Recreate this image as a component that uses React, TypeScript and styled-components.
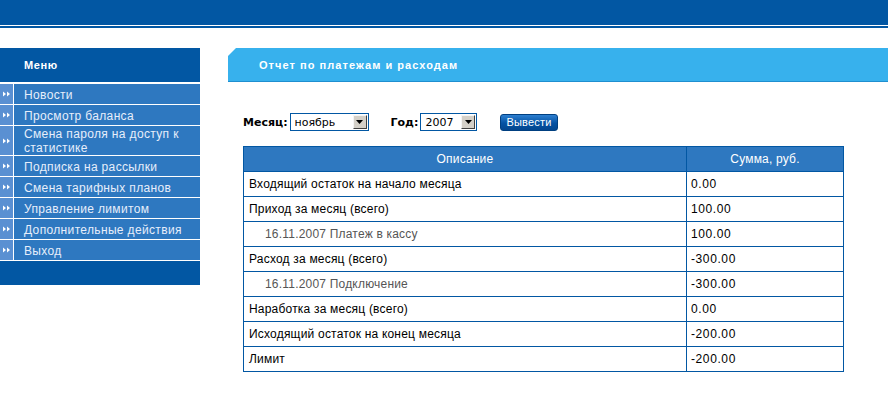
import React from 'react';
import styled, { createGlobalStyle } from 'styled-components';

const DarkBlue = '#0257a3';
const MidBlue = '#2e78c0';
const SkyBlue = '#37b1ed';

const GlobalStyle = createGlobalStyle`
  html, body {
    margin: 0;
    padding: 0;
    background: #ffffff;
    font-family: 'Liberation Sans', Arial, sans-serif;
  }
`;

interface Row {
  text: string;
  sum: string;
  sub?: boolean;
}

const MENU_ITEMS = [
  'Новости',
  'Просмотр баланса',
  'Смена пароля на доступ к статистике',
  'Подписка на рассылки',
  'Смена тарифных планов',
  'Управление лимитом',
  'Дополнительные действия',
  'Выход',
];

const ROWS: Row[] = [
  { text: 'Входящий остаток на начало месяца', sum: '0.00' },
  { text: 'Приход за месяц (всего)', sum: '100.00' },
  { text: '16.11.2007 Платеж в кассу', sum: '100.00', sub: true },
  { text: 'Расход за месяц (всего)', sum: '-300.00' },
  { text: '16.11.2007 Подключение', sum: '-300.00', sub: true },
  { text: 'Наработка за месяц (всего)', sum: '0.00' },
  { text: 'Исходящий остаток на конец месяца', sum: '-200.00' },
  { text: 'Лимит', sum: '-200.00' },
];

const Page = styled.div`
  width: 888px;
  min-height: 394px;
`;

const TopBand = styled.div`
  height: 25px;
  background: ${DarkBlue};
  border-bottom: 1px solid #ffffff;
  box-shadow: 0 2px 0 ${DarkBlue};
  margin-bottom: 2px;
`;

const Layout = styled.div`
  display: flex;
  align-items: flex-start;
  padding-top: 20px;
`;

const Sidebar = styled.div`
  width: 200px;
  flex-shrink: 0;
  display: flex;
  flex-direction: column;
  gap: 1px;
  background: #ffffff;
`;

const MenuHead = styled.div`
  height: 34px;
  background: ${DarkBlue};
  color: #ffffff;
  font-weight: bold;
  font-size: 11px;
  letter-spacing: 0.6px;
  display: flex;
  align-items: center;
  padding-left: 24px;
  margin-bottom: 1px;
`;

const MenuItem = styled.div`
  display: flex;
  min-height: 20px;
  background: ${MidBlue};
`;

const ArrowCell = styled.div`
  width: 13px;
  flex-shrink: 0;
  background: #5a90d2;
  border-right: 1px solid #ffffff;
  display: flex;
  align-items: center;
  justify-content: center;
`;

const MenuText = styled.div`
  padding: 1px 4px 0 10px;
  color: #e6eefb;
  font-size: 12px;
  line-height: 14px;
  letter-spacing: 0.35px;
  display: flex;
  align-items: center;
  min-height: 19px;
`;

const MenuFoot = styled.div`
  height: 24px;
  background: ${DarkBlue};
`;

const Main = styled.div`
  flex: 1;
  padding-left: 28px;
`;

const TitleBar = styled.div`
  height: 33px;
  background: ${SkyBlue};
  border-bottom: 1px solid #1f8fd0;
  clip-path: polygon(8px 0, 100% 0, 100% 100%, 0 100%, 0 8px);
  display: flex;
  align-items: center;
  padding-left: 31px;
  color: #ffffff;
  font-weight: bold;
  font-size: 11px;
  letter-spacing: 1.05px;
`;

const Content = styled.div`
  padding: 31px 0 0 15px;
`;

const Filters = styled.div`
  display: flex;
  align-items: center;
  height: 18px;
`;

const Label = styled.span`
  font-family: 'DejaVu Sans', Verdana, sans-serif;
  font-weight: bold;
  font-size: 11px;
  color: #000000;
  margin-right: 2px;
`;

const Select = styled.div<{ $width: number; $gap: number }>`
  width: ${(p) => p.$width}px;
  height: 18px;
  box-sizing: border-box;
  border: 1px solid ${DarkBlue};
  display: flex;
  align-items: center;
  justify-content: space-between;
  padding: 1px;
  margin-right: ${(p) => p.$gap}px;
  font-family: 'DejaVu Sans', Verdana, sans-serif;
  font-size: 11px;
  color: #000000;
`;

const SelectValue = styled.span`
  padding-left: 3px;
`;

const DropButton = styled.span`
  width: 14px;
  height: 14px;
  box-sizing: border-box;
  background: #d4d0c8;
  border: 1px solid;
  border-color: #f4f4f4 #404040 #404040 #f4f4f4;
  display: flex;
  align-items: center;
  justify-content: center;
`;

const ShowButton = styled.button`
  height: 17px;
  padding: 0 5px;
  border: 1px solid #003f80;
  border-radius: 3px;
  background: linear-gradient(#2d7fd0, #0452a3 55%, #03468e);
  color: #ffffff;
  font-family: 'Liberation Sans', Arial, sans-serif;
  font-size: 11px;
  letter-spacing: 0.2px;
  line-height: 14px;
  cursor: pointer;
`;

const Table = styled.table`
  margin-top: 15px;
  width: 601px;
  border-collapse: collapse;
  font-size: 12px;
  letter-spacing: 0.2px;
`;

const HeadCell = styled.th<{ $width?: number }>`
  background: ${MidBlue};
  color: #ffffff;
  font-weight: normal;
  height: 24px;
  padding: 0;
  border: 1px solid ${DarkBlue};
  text-align: center;
  width: ${(p) => (p.$width ? `${p.$width}px` : 'auto')};
`;

const Cell = styled.td<{ $sub?: boolean }>`
  height: 24px;
  padding: 0 0 0 ${(p) => (p.$sub ? 21 : 5)}px;
  border: 1px solid ${DarkBlue};
  color: ${(p) => (p.$sub ? '#555555' : '#000000')};
`;

const SumCell = styled.td`
  height: 24px;
  padding: 0 0 0 4px;
  border: 1px solid ${DarkBlue};
  color: #000000;
  letter-spacing: 0.6px;
`;

const Arrows = (): JSX.Element => (
  <svg width="9" height="6" viewBox="0 0 9 6">
    <path d="M1 0.5 L4 3 L1 5.5 Z M5 0.5 L8 3 L5 5.5 Z" fill="#ffffff" />
  </svg>
);

const DownTriangle = (): JSX.Element => (
  <svg width="7" height="4" viewBox="0 0 7 4">
    <path d="M0 0 H7 L3.5 4 Z" fill="#000000" />
  </svg>
);

const App = (): JSX.Element => {
  return (
    <Page>
      <GlobalStyle />
      <TopBand />
      <Layout>
        <Sidebar>
          <MenuHead>Меню</MenuHead>
          {MENU_ITEMS.map((item) => (
            <MenuItem key={item}>
              <ArrowCell>
                <Arrows />
              </ArrowCell>
              <MenuText>{item}</MenuText>
            </MenuItem>
          ))}
          <MenuFoot />
        </Sidebar>
        <Main>
          <TitleBar>Отчет по платежам и расходам</TitleBar>
          <Content>
            <Filters>
              <Label>Месяц:</Label>
              <Select $width={79} $gap={22}>
                <SelectValue>ноябрь</SelectValue>
                <DropButton>
                  <DownTriangle />
                </DropButton>
              </Select>
              <Label>Год:</Label>
              <Select $width={57} $gap={23}>
                <SelectValue>2007</SelectValue>
                <DropButton>
                  <DownTriangle />
                </DropButton>
              </Select>
              <ShowButton type="button">Вывести</ShowButton>
            </Filters>
            <Table>
              <thead>
                <tr>
                  <HeadCell>Описание</HeadCell>
                  <HeadCell $width={156}>Сумма, руб.</HeadCell>
                </tr>
              </thead>
              <tbody>
                {ROWS.map((row) => (
                  <tr key={row.text}>
                    <Cell $sub={row.sub}>{row.text}</Cell>
                    <SumCell>{row.sum}</SumCell>
                  </tr>
                ))}
              </tbody>
            </Table>
          </Content>
        </Main>
      </Layout>
    </Page>
  );
};

export default App;
